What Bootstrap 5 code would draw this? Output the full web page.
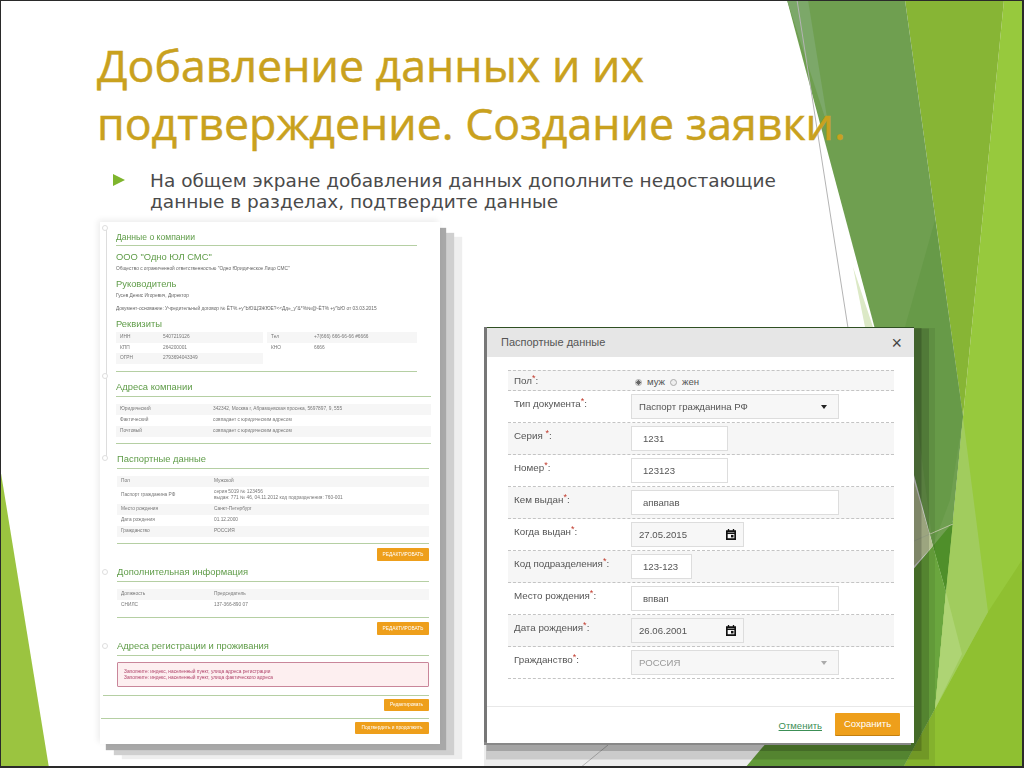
<!DOCTYPE html>
<html lang="ru">
<head>
<meta charset="utf-8">
<title>Добавление данных</title>
<link href="https://cdn.jsdelivr.net/npm/bootstrap@5.3.0/dist/css/bootstrap.min.css" rel="stylesheet">
<style>
html,body{margin:0;background:#111;overflow:hidden}
.slide-canvas{position:relative;width:1024px;height:768px;background:#fff;border-style:solid;border-color:#2a2a2a;border-width:1px 2px 2px 1px;overflow:hidden;box-sizing:border-box}
.slide-bg{position:absolute;left:-1px;top:-1px;width:1024px;height:768px}
.slide-head{position:relative;padding:35px 0 0 96px;width:800px}
.slide-title{font-family:"Open Sans","Noto Sans",sans-serif;font-weight:500;font-size:44.7px;line-height:58px;color:#c9a11e;margin:0;white-space:nowrap;-webkit-text-stroke:.5px #c9a11e}
.slide-bullet{padding:18px 0 0 16px;gap:25px;font-family:"DejaVu Sans",sans-serif;font-size:18.5px;line-height:21px;color:#4a4a4a;white-space:nowrap}
.bullet-mark{width:0;height:0;border-left:12px solid #7fb52d;border-top:6.5px solid transparent;border-bottom:6.5px solid transparent;margin-top:4px;flex:none}
.page-shot{position:absolute;left:99px;top:221px;width:340px;height:522px;background:#fff;box-shadow:-2px -2px 6px rgba(0,0,0,.08),6px 6px 1px #a8a8a8,14px 11px 1px #cfcfcf,22px 15px 1px #eee;font-family:"Liberation Sans",sans-serif;color:#666;font-size:4.8px;line-height:6px}
.shot-inner{filter:blur(.4px);padding:0 10px 0 16px;height:100%}
.shot-axis{position:absolute;left:6px;top:8px;height:230px;width:1px;background:#ddd}
.shot-dot{position:absolute;left:-14px;top:3px;width:6px;height:6px;border-radius:50%;border:1px solid #ddd;background:#fff}
.shot-sec{position:relative}
.shot-sec.narrow{width:312px;margin-left:1px}
.shot-h{font-size:8.6px;line-height:11px;color:#5f9c48;margin:0;font-weight:400}
.shot-h2{font-size:9.4px;line-height:12px;color:#5f9c48;margin:0;font-weight:400}
.shot-rule{height:1px;background:#b5cfa3;margin:0}
.shot-tr{display:flex;height:11px;align-items:center;padding-left:4px;color:#777}
.shot-tr:nth-child(odd){background:#f6f6f6}
.shot-tr.tall{height:17px}
.shot-tr.slim{height:10.5px}
.shot-l{width:93px;flex:none}
.shot-l2{width:43px;flex:none}
.shot-btn{background:#ee9f1b;color:#fff;font-size:4.8px;height:13px;line-height:13px;text-align:center;margin-left:auto;border-radius:1px}
.shot-alert{height:25px;border:1px solid #c9869a;background:#fdeff0;color:#b0446a;padding:6px 6px;border-radius:1px;margin-top:6px}
.form-shot{position:absolute;left:486px;top:327px;width:427px;height:415px;background:#fff;display:flex;flex-direction:column;box-shadow:0 -1px 0 #2f4f22,-3px -1px 0 #777,-3px 2px 0 #888,3.5px 4px 0 4px rgba(0,0,0,.19),7px 8.5px 0 8px rgba(0,0,0,.14),9px 12px 0 12px rgba(0,0,0,.07);font-family:"Liberation Sans",sans-serif;color:#555;font-size:9.8px}
.form-top{height:29px;background:#e6e6e6;padding:0 12px 0 14px;font-size:11px;color:#555}
.form-x{font-size:18px;line-height:1;color:#444}
.form-list{padding:13px 20px 0 21px;flex:1}
.form-row{display:flex;border-bottom:1px dashed #c4c4c4;height:32px;padding-left:6px;padding-top:3px}
.form-row.zebra{background:#f6f6f6}
.form-row.first{height:21px;border-top:1px dashed #c4c4c4;padding-top:3px;background:#f6f6f6}
.form-row.first .form-lbl{padding-top:0}
.form-lbl{width:117px;flex:none;padding-top:2.5px;line-height:14px;filter:blur(.25px)}
.req{color:#c0392b;vertical-align:3px;font-size:9px;line-height:0}
div.form-control.fld{width:97px;height:25px;border-radius:0;border:1px solid #ddd;padding:0 0 0 11px;line-height:23px;font-size:9.6px;color:#555;background:#fff;display:flex;align-items:center;justify-content:space-between;filter:blur(.2px)}
div.form-control.w-date{width:113px;padding-left:7px;padding-right:7px;background:#f7f7f7}
div.form-control.w-code{width:61px}
div.form-control.w-wide{width:208px}
div.form-control.w-sel{width:208px;padding-left:7px;padding-right:11px;background:#f7f7f7}
div.form-control.w-off{color:#999}
.sel-caret{width:0;height:0;border-left:3.5px solid transparent;border-right:3.5px solid transparent;border-top:4px solid #222}
.w-off .sel-caret{border-top-color:#aaa}
.radio-dot{width:7px;height:7px;border-radius:50%;border:1px solid #aaa;display:inline-block;background:#eee}
.radio-dot.on{background:radial-gradient(circle,#666 0 2px,#eee 2.3px)}
.radio-set{gap:5px;padding-left:4px;line-height:12px;font-size:9.6px}
.form-foot{height:37px;border-top:1px solid #e8e8e8;padding:6px 14px 0 0;margin-bottom:0;flex:none;gap:13px}
.foot-link{color:#3c8f56;text-decoration:underline;font-size:9.5px}
.foot-btn{width:65px;height:22px;background:#ee9f1b;color:#fff;font-size:9.5px;border-radius:1px;box-shadow:0 1px 0 #c27f10}
</style>
</head>
<body>
<div class="slide-canvas">
<svg class="slide-bg" viewBox="0 0 1024 768" aria-hidden="true">
<polygon points="0,467 49,768 0,768" fill="#9bc440"/>
<polygon points="1004,0 1024,0 1024,768 903,768 935,709 946,592 963,417" fill="#97c93d"/>
<polygon points="1024,557 988,612 935,709 903,768 1024,768" fill="#8fc031"/>
<polygon points="905,0 1004,0 963,417" fill="#87b535"/>
<polygon points="787,0 905,0 963,417 946,592 933,546" fill="#6f9f50"/>
<polygon points="787,0 808,0 829,130" fill="#7ca869"/>
<polygon points="905,327 935,220 963,417 950,500 933,546" fill="#679a48"/>
<polygon points="853,267 873,327 865,327" fill="#dce9c6"/>
<polygon points="933,546 953,522 946,592" fill="#4f8f2a"/>
<polygon points="914,481 933,546 914,566" fill="#c4d0a0"/>
<polygon points="933,546 946,592 935,709 903,768 745,768" fill="#6aa63e"/>
<polygon points="963,417 988,612 935,709 946,592 953,522" fill="#a1cc5e"/>
<polygon points="946,592 962,654 935,709" fill="#aed474"/>
<line x1="797" y1="0" x2="848" y2="328" stroke="#b4b4b4"/>
<line x1="608" y1="745" x2="580" y2="768" stroke="#c4c4c4"/>
<line x1="914" y1="541" x2="953" y2="524" stroke="#b9c4a0"/>
</svg>

<header class="slide-head">
<h1 class="slide-title">Добавление данных и их<br>подтверждение. Создание заявки.</h1>
<div class="slide-bullet d-flex align-items-start">
<span class="bullet-mark"></span>
<span>На общем экране добавления данных дополните недостающие<br>данные в разделах, подтвердите данные</span>
</div>
</header>

<section class="page-shot">
<div class="shot-axis"></div>
<div class="shot-inner">
<div class="shot-sec" style="padding-top:10px">
<span class="shot-dot"></span>
<p class="shot-h">Данные о компании</p>
<div class="shot-rule" style="width:301px;margin-top:2px"></div>
<p class="shot-h2" style="margin-top:5px">ООО "Одно ЮЛ СМС"</p>
<p class="m-0" style="margin-top:3px!important">Общество с ограниченной ответственностью "Одно Юридическое Лицо СМС"</p>
<p class="shot-h2" style="margin-top:6px">Руководитель</p>
<p class="m-0" style="margin-top:3px!important">Гусев Денис Игоревич, Директор</p>
<p class="m-0" style="margin-top:7px!important">Документ-основание: Учредительный договор № ЁТ%.+у"ЬЮЩЭЖЮЕ?&lt;&lt;Дд»_у"&*%№@-ЁТ% +у"ЬЮ от 03.03.2015</p>
<p class="shot-h2" style="margin-top:6px">Реквизиты</p>
<div class="d-flex" style="gap:4px;margin-top:2px;width:301px">
<div style="width:147px">
<div class="shot-tr slim"><span class="shot-l2">ИНН</span>5407219126</div>
<div class="shot-tr slim"><span class="shot-l2">КПП</span>264200001</div>
<div class="shot-tr slim"><span class="shot-l2">ОГРН</span>2793694043349</div>
</div>
<div style="width:150px">
<div class="shot-tr slim"><span class="shot-l2">Тел</span>+7(666) 666-66-66 #6666</div>
<div class="shot-tr slim"><span class="shot-l2">КНО</span>6666</div>
</div>
</div>
<div class="shot-rule" style="width:301px;margin-top:7px"></div>
</div>
<div class="shot-sec" style="padding-top:9px">
<span class="shot-dot" style="top:1px"></span>
<p class="shot-h2">Адреса компании</p>
<div class="shot-rule" style="margin-top:3px;width:315px"></div>
<div style="margin-top:7px;width:315px">
<div class="shot-tr"><span class="shot-l">Юридический</span>342342, Москва г, Абрамцевская просека, 5697897, 9, 555</div>
<div class="shot-tr"><span class="shot-l">Фактический</span>совпадает с юридическим адресом</div>
<div class="shot-tr"><span class="shot-l">Почтовый</span>совпадает с юридическим адресом</div>
</div>
<div class="shot-rule" style="margin-top:6px;width:315px"></div>
</div>
<div class="shot-sec narrow" style="padding-top:9px">
<span class="shot-dot" style="top:11px;left:-15px"></span>
<p class="shot-h2">Паспортные данные</p>
<div class="shot-rule" style="margin-top:3px"></div>
<div style="margin-top:7px">
<div class="shot-tr"><span class="shot-l">Пол</span>Мужской</div>
<div class="shot-tr tall" style="background:#fff"><span class="shot-l">Паспорт гражданина РФ</span><span>серия 5019 № 123456<br>выдан: 771 № 46, 04.11.2012 код подразделения: 760-001</span></div>
<div class="shot-tr" style="background:#f6f6f6"><span class="shot-l">Место рождения</span>Санкт-Петербург</div>
<div class="shot-tr" style="background:#fff"><span class="shot-l">Дата рождения</span>01.12.2000</div>
<div class="shot-tr" style="background:#f6f6f6"><span class="shot-l">Гражданство</span>РОССИЯ</div>
</div>
<div class="shot-rule" style="margin-top:6px"></div>
<div class="shot-btn" style="width:52px;margin-top:4px">РЕДАКТИРОВАТЬ</div>
</div>
<div class="shot-sec narrow" style="padding-top:5px">
<span class="shot-dot" style="top:8px;left:-15px"></span>
<p class="shot-h2">Дополнительная информация</p>
<div class="shot-rule" style="margin-top:3px"></div>
<div style="margin-top:7px">
<div class="shot-tr"><span class="shot-l">Должность</span>Председатель</div>
<div class="shot-tr"><span class="shot-l">СНИЛС</span>137-366-890 07</div>
</div>
<div class="shot-rule" style="margin-top:6px"></div>
<div class="shot-btn" style="width:52px;margin-top:4px">РЕДАКТИРОВАТЬ</div>
</div>
<div class="shot-sec narrow" style="padding-top:5px">
<span class="shot-dot" style="top:8px;left:-15px"></span>
<p class="shot-h2">Адреса регистрации и проживания</p>
<div class="shot-rule" style="margin-top:3px"></div>
<div class="shot-alert">Заполните: индекс, населенный пункт, улица адреса регистрации<br>Заполните: индекс, населенный пункт, улица фактического адреса</div>
</div>
<div class="shot-rule" style="margin:8px 0 0 -13px;width:326px"></div>
<div class="shot-btn" style="width:45px;margin:3px 0 0 268px;height:12px;line-height:12px">Редактировать</div>
<div class="shot-rule" style="margin:7px 0 0 -15px;width:328px"></div>
<div class="shot-btn" style="width:74px;margin:3px 0 0 239px;height:12px;line-height:12px">Подтвердить и продолжить</div>
</div>
</section>

<section class="form-shot">
<div class="form-top d-flex align-items-center justify-content-between flex-none">
<span>Паспортные данные</span><span class="form-x">×</span>
</div>
<div class="form-list">
<div class="form-row first"><span class="form-lbl">Пол<span class="req">*</span>:</span>
<span class="radio-set d-flex align-items-center"><span class="radio-dot on"></span>муж<span class="radio-dot"></span>жен</span></div>
<div class="form-row"><span class="form-lbl">Тип документа<span class="req">*</span>:</span>
<div class="form-control fld w-sel"><span>Паспорт гражданина РФ</span><span class="sel-caret"></span></div></div>
<div class="form-row zebra"><span class="form-lbl">Серия <span class="req">*</span>:</span><div class="form-control fld">1231</div></div>
<div class="form-row"><span class="form-lbl">Номер<span class="req">*</span>:</span><div class="form-control fld">123123</div></div>
<div class="form-row zebra"><span class="form-lbl">Кем выдан<span class="req">*</span>:</span><div class="form-control fld w-wide">апвапав</div></div>
<div class="form-row"><span class="form-lbl">Когда выдан<span class="req">*</span>:</span><div class="form-control fld w-date"><span>27.05.2015</span>
<svg width="10" height="11" viewBox="0 0 12 13"><path d="M1 2.5h10v9.5H1z M1 5h10" fill="none" stroke="#111" stroke-width="2"/><path d="M3 0v2.5M9 0v2.5" stroke="#111" stroke-width="1.6"/><rect x="6" y="7" width="3" height="3" fill="#111"/></svg></div></div>
<div class="form-row zebra"><span class="form-lbl">Код подразделения<span class="req">*</span>:</span><div class="form-control fld w-code">123-123</div></div>
<div class="form-row"><span class="form-lbl">Место рождения<span class="req">*</span>:</span><div class="form-control fld w-wide">впвап</div></div>
<div class="form-row zebra"><span class="form-lbl">Дата рождения<span class="req">*</span>:</span><div class="form-control fld w-date"><span>26.06.2001</span>
<svg width="10" height="11" viewBox="0 0 12 13"><path d="M1 2.5h10v9.5H1z M1 5h10" fill="none" stroke="#111" stroke-width="2"/><path d="M3 0v2.5M9 0v2.5" stroke="#111" stroke-width="1.6"/><rect x="6" y="7" width="3" height="3" fill="#111"/></svg></div></div>
<div class="form-row"><span class="form-lbl">Гражданство<span class="req">*</span>:</span><div class="form-control fld w-sel w-off"><span>РОССИЯ</span><span class="sel-caret"></span></div></div>
</div>
<div class="form-foot d-flex justify-content-end align-items-start">
<span class="foot-link" style="margin-top:6px">Отменить</span>
<span class="foot-btn d-flex align-items-center justify-content-center">Сохранить</span>
</div>
</section>
</div>
</body>
</html>
